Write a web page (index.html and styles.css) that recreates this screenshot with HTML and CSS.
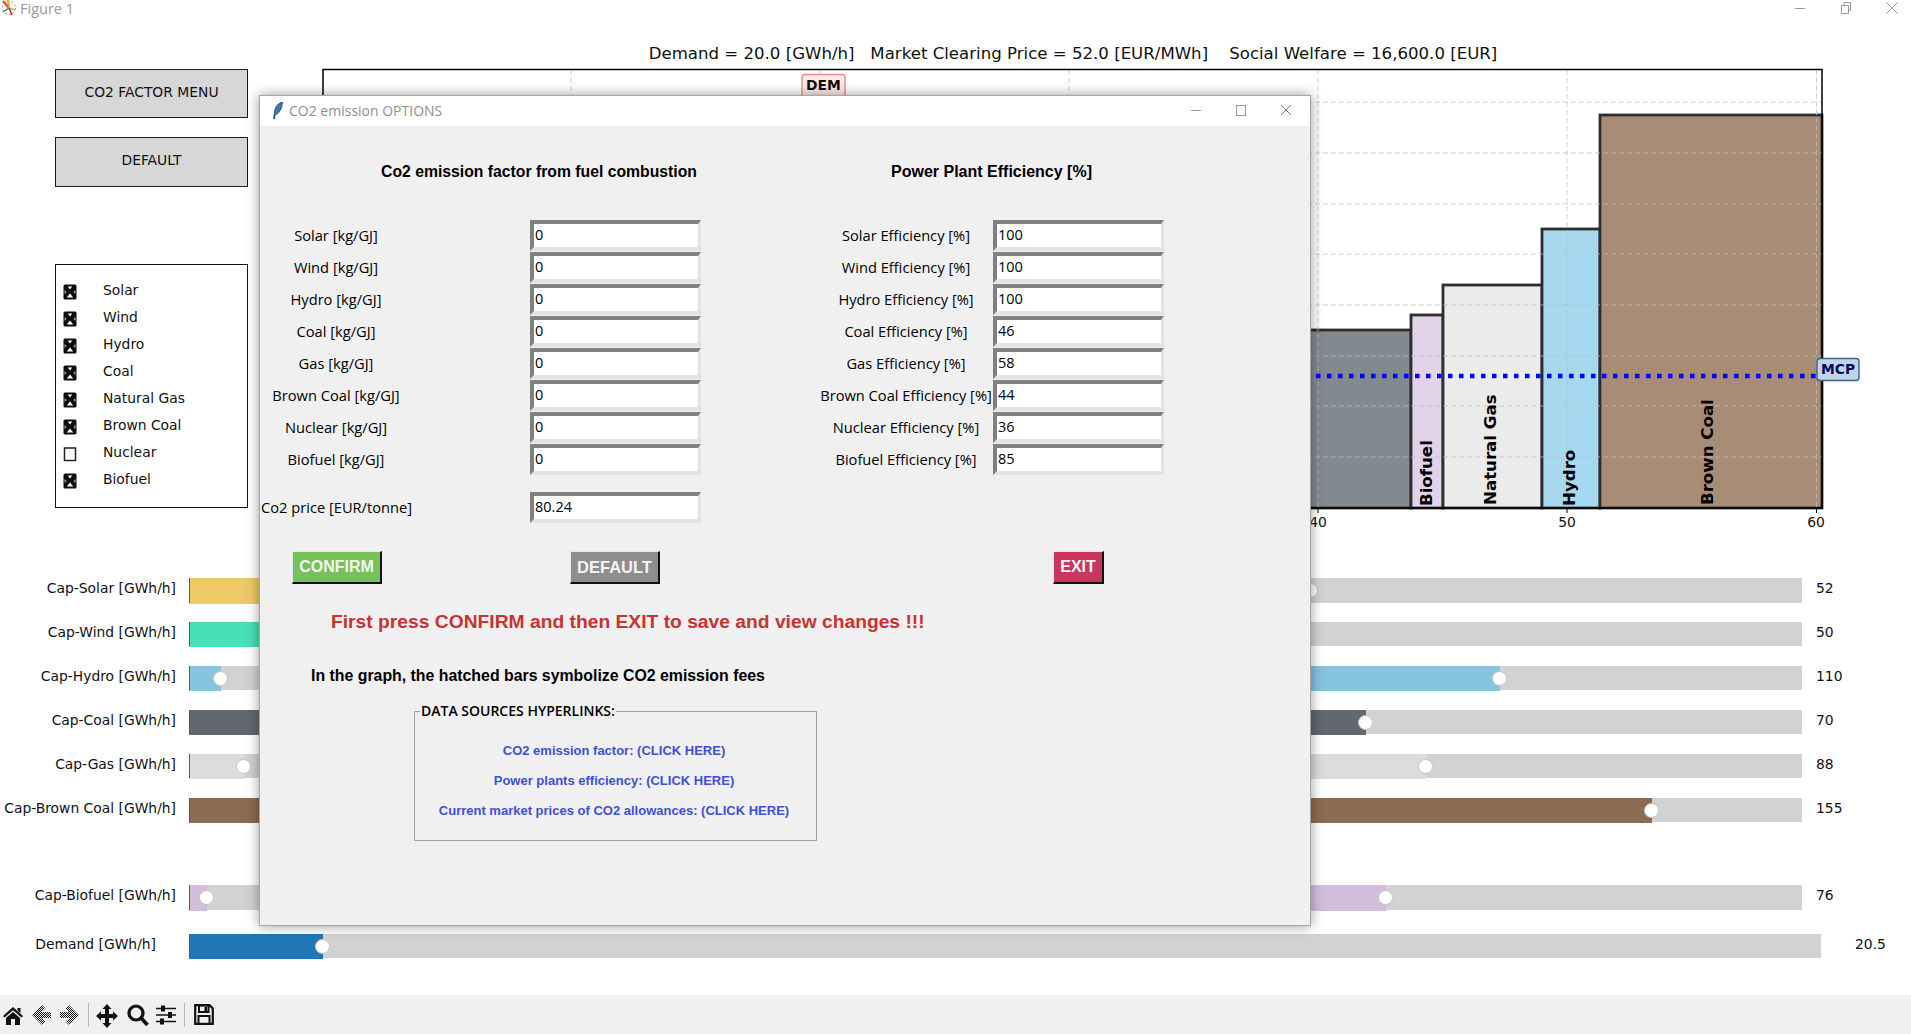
FILE: index.html
```html
<!DOCTYPE html>
<html>
<head>
    <title>Figure 1</title>
    <link rel="stylesheet" href="styles.css">
</head>
<body>
<div class="app">
    <header class="titlebar">
        <svg class="app-icon" width="16" height="18" viewBox="0 0 16 18">
            <circle cx="8" cy="9" r="6.5" fill="none" stroke="#999" stroke-width="1" stroke-dasharray="2 2"/>
            <path d="M8 9L2 2" stroke="#d9541e" stroke-width="2.4"/>
            <path d="M8 9L7 1" stroke="#f0a020" stroke-width="2"/>
            <path d="M8 9L14 11" stroke="#e8b030" stroke-width="1.6"/>
            <path d="M8 9L11 16" stroke="#c03020" stroke-width="1.6"/>
            <path d="M8 9L2 13" stroke="#3070b0" stroke-width="1.4"/>
        </svg>
        <span class="titlebar-text">Figure 1</span>
        <div class="win-controls">
            <svg width="14" height="14" viewBox="0 0 14 14"><path d="M2 7.5H12" stroke="#9a9a9a"/></svg>
            <svg width="14" height="14" viewBox="0 0 14 14"><path d="M2.5 4.5H9.5V12.5H2.5ZM5 4.5V1.5H11.5V9.5H9.5" fill="none" stroke="#9a9a9a"/></svg>
            <svg width="14" height="14" viewBox="0 0 14 14"><path d="M1.5 1.5L12.5 12.5M12.5 1.5L1.5 12.5" stroke="#9a9a9a"/></svg>
        </div>
    </header>

    <main class="figure">
        <div class="upper">
            <aside class="side">
                <button class="fig-btn">CO2 FACTOR MENU</button>
                <button class="fig-btn second">DEFAULT</button>
                <div class="check-panel">
                    <div class="check-row"><svg class="cb" viewBox="0 0 14 16"><use href="#checked"/></svg>Solar</div>
                    <div class="check-row"><svg class="cb" viewBox="0 0 14 16"><use href="#checked"/></svg>Wind</div>
                    <div class="check-row"><svg class="cb" viewBox="0 0 14 16"><use href="#checked"/></svg>Hydro</div>
                    <div class="check-row"><svg class="cb" viewBox="0 0 14 16"><use href="#checked"/></svg>Coal</div>
                    <div class="check-row"><svg class="cb" viewBox="0 0 14 16"><use href="#checked"/></svg>Natural Gas</div>
                    <div class="check-row"><svg class="cb" viewBox="0 0 14 16"><use href="#checked"/></svg>Brown Coal</div>
                    <div class="check-row"><svg class="cb" viewBox="0 0 14 16"><rect x="1.5" y="2" width="11" height="12.5" fill="#fff" stroke="#222" stroke-width="1.5"/></svg>Nuclear</div>
                    <div class="check-row"><svg class="cb" viewBox="0 0 14 16"><use href="#checked"/></svg>Biofuel</div>
                </div>
            </aside>

            <svg class="chart" width="1611" height="500" viewBox="300 40 1611 500">
                <text class="chart-title" x="1073" y="59" text-anchor="middle">Demand = 20.0 [GWh/h]   Market Clearing Price = 52.0 [EUR/MWh]    Social Welfare = 16,600.0 [EUR]</text>

                <rect x="1250" y="330" width="161" height="178" fill="#82898f" stroke="#2d2d2d" stroke-width="2.8"/>
                <rect x="1411" y="315" width="32" height="193" fill="#e3d3ea" stroke="#2d2d2d" stroke-width="2.8"/>
                <rect x="1443" y="285" width="99" height="223" fill="#ebebeb" stroke="#2d2d2d" stroke-width="2.8"/>
                <rect x="1542" y="229" width="58" height="279" fill="#a6d9ef" stroke="#2d2d2d" stroke-width="2.8"/>
                <rect x="1600" y="115" width="222" height="393" fill="#a88d76" stroke="#2d2d2d" stroke-width="2.8"/>

                <g class="grid">
                    <path d="M571 70V508M820 70V508M1069 70V508M1318 70V508M1567 70V508M1816.5 70V508"/>
                    <path d="M323 102H1822M323 153H1822M323 204H1822M323 254H1822M323 305H1822M323 356H1822M323 406H1822M323 457H1822"/>
                </g>

                <path d="M1316 376H1816" stroke="#0000ff" stroke-width="4.5" stroke-dasharray="4.5 6.5"/>

                <text class="bar-label" transform="translate(1432 506) rotate(-90)">Biofuel</text>
                <text class="bar-label" transform="translate(1496 505) rotate(-90)">Natural Gas</text>
                <text class="bar-label" transform="translate(1575 506) rotate(-90)">Hydro</text>
                <text class="bar-label" transform="translate(1713 505) rotate(-90)">Brown Coal</text>

                <rect x="323" y="69.5" width="1499" height="438.5" fill="none" stroke="#000" stroke-width="1.5"/>

                <path d="M1318 508V513M1567 508V513M1816.5 508V513" stroke="#000"/>
                <text class="tick" x="1318" y="527" text-anchor="middle">40</text>
                <text class="tick" x="1567" y="527" text-anchor="middle">50</text>
                <text class="tick" x="1816" y="527" text-anchor="middle">60</text>

                <rect x="802" y="74.5" width="43" height="26" rx="3" fill="#fdeae8" stroke="#f08a80" stroke-width="1.4"/>
                <text class="tag" x="823.5" y="90" text-anchor="middle" fill="#111">DEM</text>

                <rect x="1817" y="358.5" width="42" height="22" rx="3" fill="#bfd6ea" stroke="#3f5f8f" stroke-width="1.4"/>
                <text class="tag" x="1838" y="373.5" text-anchor="middle" fill="#0a0a5a">MCP</text>
            </svg>
        </div>

        <section class="sliders">
            <div class="slider-row">
                <span class="s-label">Cap-Solar [GWh/h]</span>
                <div class="s-track tall">
                    <div class="s-fill solar" style="width: 1121px"></div>
                    <div class="s-knob" style="left: 1121px"></div>
                </div>
                <span class="s-value">52</span>
            </div>
            <div class="slider-row">
                <span class="s-label">Cap-Wind [GWh/h]</span>
                <div class="s-track">
                    <div class="s-fill wind" style="width: 1100px"></div>
                </div>
                <span class="s-value">50</span>
            </div>
            <div class="slider-row">
                <span class="s-label">Cap-Hydro [GWh/h]</span>
                <div class="s-track">
                    <div class="s-fill hydro" style="left: 800px; width: 511px"></div>
                    <div class="s-fill hydro" style="width: 32px"></div>
                    <div class="s-knob" style="left: 31px"></div>
                    <div class="s-knob" style="left: 1310px"></div>
                </div>
                <span class="s-value">110</span>
            </div>
            <div class="slider-row">
                <span class="s-label">Cap-Coal [GWh/h]</span>
                <div class="s-track">
                    <div class="s-fill coal" style="width: 1177px"></div>
                    <div class="s-knob" style="left: 1176px"></div>
                </div>
                <span class="s-value">70</span>
            </div>
            <div class="slider-row">
                <span class="s-label">Cap-Gas [GWh/h]</span>
                <div class="s-track">
                    <div class="s-fill gas" style="left: 800px; width: 437px"></div>
                    <div class="s-fill gas" style="width: 55px"></div>
                    <div class="s-knob" style="left: 54px"></div>
                    <div class="s-knob" style="left: 1236px"></div>
                </div>
                <span class="s-value">88</span>
            </div>
            <div class="slider-row">
                <span class="s-label">Cap-Brown Coal [GWh/h]</span>
                <div class="s-track">
                    <div class="s-fill brown" style="width: 1463px"></div>
                    <div class="s-knob" style="left: 1462px"></div>
                </div>
                <span class="s-value">155</span>
            </div>
            <div class="slider-row biofuel-row">
                <span class="s-label">Cap-Biofuel [GWh/h]</span>
                <div class="s-track tall">
                    <div class="s-fill biofuel" style="left: 800px; width: 397px"></div>
                    <div class="s-fill biofuel" style="width: 18px"></div>
                    <div class="s-knob" style="left: 17px"></div>
                    <div class="s-knob" style="left: 1196px"></div>
                </div>
                <span class="s-value">76</span>
            </div>
            <div class="slider-row demand-row">
                <span class="s-label">Demand [GWh/h]</span>
                <div class="s-track">
                    <div class="s-fill demand" style="width: 134px"></div>
                    <div class="s-knob" style="left: 133px"></div>
                </div>
                <span class="s-value">20.5</span>
            </div>
        </section>
    </main>

    <footer class="toolbar">
        <svg class="tool t-home" width="20" height="18" viewBox="0 0 20 18"><path d="M10 0L20 9L18.5 10.6L10 3.2L1.5 10.6L0 9ZM14.5 1H17.5V6L14.5 3.4ZM3 11L10 5L17 11V18H12V12H8V18H3Z" fill="#111"/></svg>
        <svg class="tool t-back" width="20" height="20" viewBox="0 0 20 20"><path d="M0 10L10 0L13.5 3.5L9.5 7H19V13H9.5L13.5 16.5L10 20Z" fill="url(#dither)"/></svg>
        <svg class="tool t-fwd" width="20" height="20" viewBox="0 0 20 20"><path d="M20 10L10 0L6.5 3.5L10.5 7H1V13H10.5L6.5 16.5L10 20Z" fill="url(#dither)"/></svg>
        <span class="tool-sep"></span>
        <svg class="tool t-move" width="22" height="24" viewBox="0 0 22 24"><path d="M11 0L15.5 5H13V10H17V7.5L22 12L17 16.5V14H13V19H15.5L11 24L6.5 19H9V14H5V16.5L0 12L5 7.5V10H9V5H6.5Z" fill="#111"/></svg>
        <svg class="tool t-zoom" width="22" height="23" viewBox="0 0 22 23"><circle cx="9" cy="9" r="7" fill="none" stroke="#111" stroke-width="3.2"/><path d="M14 14L20.5 21" stroke="#111" stroke-width="3.6"/></svg>
        <svg class="tool t-sliders" width="20" height="20" viewBox="0 0 20 20"><path d="M0 3.5H20M0 10H20M0 16.5H20" stroke="#111" stroke-width="1.6"/><path d="M5 0.5H9V6.5H5ZM12 7H16V13H12ZM4 13.5H8V19.5H4Z" fill="#111"/></svg>
        <span class="tool-sep second"></span>
        <svg class="tool t-save" width="20" height="21" viewBox="0 0 20 21"><path d="M1.2 1.2H15.5L18.8 4.5V19.8H1.2Z" fill="none" stroke="#111" stroke-width="2.2"/><path d="M5 1.5H14.5V8H5Z" fill="none" stroke="#111" stroke-width="2"/><path d="M10.5 3H13V7H10.5Z" fill="#111"/><path d="M4.5 19.5V12H15.5V19.5" fill="none" stroke="#111" stroke-width="2"/></svg>
    </footer>

    <div class="dialog">
        <div class="dialog-title">
            <svg class="feather" width="10" height="17" viewBox="0 0 10 17"><path d="M9.5 0C5 1 2 5 1.5 10L1 13L0.5 17L1.5 17L2 13C6 12 9 7 9.5 0Z" fill="#3f76b5" stroke="#1b2f4a" stroke-width="0.7"/></svg>
            <span class="dialog-title-text">CO2 emission OPTIONS</span>
            <div class="win-controls small">
                <svg width="14" height="14" viewBox="0 0 14 14"><path d="M2 7.5H12" stroke="#9a9a9a"/></svg>
                <svg width="14" height="14" viewBox="0 0 14 14"><rect x="2.5" y="2.5" width="9" height="10" fill="none" stroke="#9a9a9a"/></svg>
                <svg width="14" height="14" viewBox="0 0 14 14"><path d="M2 2L12 12M12 2L2 12" stroke="#777"/></svg>
            </div>
        </div>
        <div class="dialog-body">
            <div class="heads">
                <h3 class="head-left">Co2 emission factor from fuel combustion</h3>
                <h3 class="head-right">Power Plant Efficiency [%]</h3>
            </div>

            <div class="field-row">
                <label>Solar [kg/GJ]</label><input class="entry" type="text" value="0">
                <label class="eff">Solar Efficiency [%]</label><input class="entry eff-entry" type="text" value="100">
            </div>
            <div class="field-row">
                <label>Wind [kg/GJ]</label><input class="entry" type="text" value="0">
                <label class="eff">Wind Efficiency [%]</label><input class="entry eff-entry" type="text" value="100">
            </div>
            <div class="field-row">
                <label>Hydro [kg/GJ]</label><input class="entry" type="text" value="0">
                <label class="eff">Hydro Efficiency [%]</label><input class="entry eff-entry" type="text" value="100">
            </div>
            <div class="field-row">
                <label>Coal [kg/GJ]</label><input class="entry" type="text" value="0">
                <label class="eff">Coal Efficiency [%]</label><input class="entry eff-entry" type="text" value="46">
            </div>
            <div class="field-row">
                <label>Gas [kg/GJ]</label><input class="entry" type="text" value="0">
                <label class="eff">Gas Efficiency [%]</label><input class="entry eff-entry" type="text" value="58">
            </div>
            <div class="field-row">
                <label>Brown Coal [kg/GJ]</label><input class="entry" type="text" value="0">
                <label class="eff">Brown Coal Efficiency [%]</label><input class="entry eff-entry" type="text" value="44">
            </div>
            <div class="field-row">
                <label>Nuclear [kg/GJ]</label><input class="entry" type="text" value="0">
                <label class="eff">Nuclear Efficiency [%]</label><input class="entry eff-entry" type="text" value="36">
            </div>
            <div class="field-row">
                <label>Biofuel [kg/GJ]</label><input class="entry" type="text" value="0">
                <label class="eff">Biofuel Efficiency [%]</label><input class="entry eff-entry" type="text" value="85">
            </div>
            <div class="field-row price-row">
                <label>Co2 price [EUR/tonne]</label><input class="entry" type="text" value="80.24">
            </div>

            <div class="action-row">
                <button class="tk-btn confirm">CONFIRM</button>
                <button class="tk-btn reset">DEFAULT</button>
                <button class="tk-btn exit">EXIT</button>
            </div>

            <p class="warning">First press CONFIRM and then EXIT to save and view changes !!!</p>
            <p class="note">In the graph, the hatched bars symbolize CO2 emission fees</p>

            <fieldset class="sources">
                <legend>DATA SOURCES HYPERLINKS:</legend>
                <a href="#">CO2 emission factor: (CLICK HERE)</a>
                <a href="#">Power plants efficiency: (CLICK HERE)</a>
                <a href="#">Current market prices of CO2 allowances: (CLICK HERE)</a>
            </fieldset>
        </div>
    </div>
</div>

<svg class="defs" width="0" height="0">
    <defs>
        <g id="checked">
            <rect x="0.5" y="0.5" width="13" height="15" rx="1.5" fill="#0c0c0c"/>
            <path d="M4.8 2.6H9.2L7 5.6ZM3.8 13.6L7 9.4L10.2 13.6Z" fill="#fff"/>
            <path d="M1.6 6L3.6 8L1.6 10ZM12.4 6L10.4 8L12.4 10Z" fill="#aaa"/>
        </g>
        <pattern id="dither" width="2" height="2" patternUnits="userSpaceOnUse">
            <rect width="1" height="1" fill="#111"/>
            <rect x="1" y="1" width="1" height="1" fill="#111"/>
        </pattern>
    </defs>
</svg>
</body>
</html>
```

FILE: styles.css
```css
* {
    box-sizing: border-box;
}

body {
    margin: 0;
    background-color: #fff;
    font-family: "DejaVu Sans", sans-serif;
    font-size: 13.87px;
    color: #111;
}

.app {
    position: relative;
    display: flex;
    flex-direction: column;
    width: 1911px;
    height: 1034px;
    overflow: hidden;
}

.defs {
    position: absolute;
}

/* title bar */
.titlebar {
    display: flex;
    align-items: center;
    height: 16px;
    flex-shrink: 0;
}

.app-icon {
    margin-left: 1px;
}

.titlebar-text {
    margin-left: 3px;
    font-family: "Open Sans", sans-serif;
    font-size: 14.5px;
    color: #9a9a9a;
}

.win-controls {
    display: flex;
    gap: 32px;
    margin-left: auto;
    margin-right: 12px;
}

.win-controls.small {
    gap: 31px;
    margin-right: 17px;
}

/* upper part */
.upper {
    display: flex;
    margin-top: 24px;
    height: 500px;
}

.side {
    width: 300px;
    padding: 29px 0 0 55px;
    flex-shrink: 0;
}

.fig-btn {
    display: block;
    width: 193px;
    height: 49px;
    padding: 0 0 3px;
    background-color: #d7d7d7;
    border: 1.5px solid #1a1a1a;
    font-family: "DejaVu Sans", sans-serif;
    font-size: 13.87px;
    color: #111;
}

.fig-btn.second {
    margin-top: 19px;
    height: 50px;
    padding-bottom: 5px;
}

.check-panel {
    width: 193px;
    height: 244px;
    margin-top: 77px;
    padding-top: 11px;
    border: 1.5px solid #111;
}

.check-row {
    display: flex;
    align-items: center;
    height: 27px;
    padding-left: 7px;
}

.cb {
    width: 14px;
    height: 16px;
    margin: 4px 26px 0 0;
}

.chart {
    display: block;
}

.chart-title {
    font-size: 16.6px;
    white-space: pre;
    fill: #111;
}

.grid path {
    fill: none;
    stroke: #bdbdbd;
    stroke-opacity: 0.75;
    stroke-width: 1;
    stroke-dasharray: 5 3;
}

.bar-label {
    font-size: 16.64px;
    font-weight: bold;
    fill: #000;
}

.tick {
    font-size: 13.87px;
    fill: #111;
}

.tag {
    font-size: 13.87px;
    font-weight: bold;
}

/* sliders */
.sliders {
    margin-top: 38px;
}

.slider-row {
    display: flex;
    align-items: flex-start;
    height: 44px;
}

.s-label {
    width: 176px;
    line-height: 21px;
    text-align: right;
    white-space: nowrap;
    flex-shrink: 0;
}

.s-track {
    position: relative;
    width: 1613px;
    height: 24px;
    margin-left: 13px;
    background-color: #d2d2d2;
    flex-shrink: 0;
}

.s-track.tall {
    height: 25px;
}

.s-track::before {
    content: "";
    position: absolute;
    z-index: 2;
    left: 0;
    top: 0;
    bottom: 0;
    width: 1px;
    background-color: #e0201c;
}

.s-fill {
    position: absolute;
    top: 0;
    bottom: -1px;
    left: 0;
}

.s-fill.solar { background-color: #eec966; }
.s-fill.wind { background-color: #48e0b5; }
.s-fill.hydro { background-color: #87c4df; }
.s-fill.coal { background-color: #616870; }
.s-fill.gas { background-color: #dcdcdc; }
.s-fill.brown { background-color: #8b6c50; }
.s-fill.biofuel { background-color: #d3bddc; }
.s-fill.demand { background-color: #1f77b4; }

.s-knob {
    position: absolute;
    top: 5px;
    width: 15px;
    height: 15px;
    margin-left: -7px;
    background-color: #fff;
    border: 1px solid #c4c4c4;
    border-radius: 50%;
}

.s-value {
    margin-left: 14px;
    line-height: 21px;
}

.biofuel-row {
    margin-top: 43px;
}

.demand-row {
    margin-top: 5px;
}

.demand-row .s-label {
    width: 156px;
}

.demand-row .s-track {
    width: 1632px;
    margin-left: 33px;
}

.demand-row .s-value {
    margin-left: 34px;
}

/* matplotlib toolbar */
.toolbar {
    display: flex;
    align-items: center;
    margin-top: auto;
    height: 39px;
    padding-left: 3px;
    background-color: #f0f0f0;
    flex-shrink: 0;
}

.tool {
    flex-shrink: 0;
}

.t-home { margin-top: 3px; }
.t-back { margin-left: 9px; }
.t-fwd { margin-left: 7px; }
.t-move { margin-left: 7px; margin-top: 2px; }
.t-zoom { margin-left: 9px; margin-top: 1px; }
.t-sliders { margin-left: 7px; }
.t-save { margin-left: 9px; margin-top: -1px; }

.tool-sep {
    width: 1px;
    height: 24px;
    margin-left: 9px;
    background-color: #b5b5b5;
}

.tool-sep.second {
    margin-left: 8px;
}

/* CO2 dialog */
.dialog {
    position: absolute;
    left: 259px;
    top: 95px;
    width: 1052px;
    height: 831px;
    background-color: #f0f0f0;
    border: 1px solid #a6a6a6;
    box-shadow: 0 0 12px rgba(0, 0, 0, 0.4);
}

.dialog-title {
    display: flex;
    align-items: center;
    height: 30px;
    padding: 0 0 2px 13px;
    background-color: #fff;
}

.dialog-title-text {
    margin-left: 6px;
    font-family: "Open Sans", sans-serif;
    font-size: 14px;
    color: #8f8f8f;
}

.dialog-body {
    padding: 36px 0 0 1px;
    font-family: "Open Sans", sans-serif;
    font-size: 14.67px;
    color: #000;
}

.heads {
    display: flex;
    height: 20px;
    margin-bottom: 38px;
}

.heads h3 {
    margin: 0;
    font-family: "Liberation Sans", sans-serif;
    font-size: 16px;
    line-height: 20px;
    text-align: center;
    white-space: nowrap;
}

.heads h3.head-left {
    width: 556px;
    font-size: 15.75px;
}

.head-right {
    width: 349px;
}

.field-row {
    display: flex;
    align-items: flex-start;
    height: 32px;
}

.field-row label {
    width: 150px;
    line-height: 30px;
    text-align: center;
    white-space: nowrap;
}

.field-row label.eff {
    width: 172px;
    margin-left: 119px;
}

.entry {
    width: 171px;
    height: 31px;
    margin-left: 119px;
    padding: 0 0 2px 1px;
    background-color: #fff;
    border-style: solid;
    border-width: 4px 3px 4px 4px;
    border-color: #808080 #e3e3e3 #e3e3e3 #808080;
    border-radius: 0;
    outline: none;
    font-family: "Open Sans", sans-serif;
    font-size: 14.5px;
    color: #000;
}

.entry.eff-entry {
    margin-left: 1px;
}

.price-row {
    margin-top: 16px;
}

.action-row {
    display: flex;
    margin-top: 27px;
    padding-left: 31px;
}

.tk-btn {
    height: 33px;
    padding: 0;
    border-style: solid;
    border-width: 1px 2px 2px 1px;
    border-color: #e8e8e8 #111 #111 #e8e8e8;
    font-family: "Liberation Sans", sans-serif;
    font-size: 16px;
    font-weight: bold;
    color: #f4f4f4;
}

.confirm {
    width: 90px;
    background-color: #77c158;
}

.reset {
    width: 90px;
    margin-left: 188px;
    background-color: #8e8e8e;
    font-size: 16.5px;
}

.exit {
    width: 51px;
    margin-left: 393px;
    background-color: #cc3560;
}

.warning {
    margin: 26px 0 0 70px;
    font-family: "Liberation Sans", sans-serif;
    font-size: 19.25px;
    font-weight: bold;
    line-height: 24px;
    color: #c73232;
    white-space: nowrap;
}

.note {
    margin: 32px 0 0 50px;
    font-family: "Liberation Sans", sans-serif;
    font-size: 15.87px;
    font-weight: bold;
    line-height: 20px;
    white-space: nowrap;
}

.sources {
    display: flex;
    flex-direction: column;
    align-items: center;
    gap: 10px;
    width: 403px;
    height: 140px;
    margin: 15px 0 0 153px;
    padding: 20px 3px 0 0;
    border: 1px solid #a0a0a0;
    min-inline-size: 0;
}

.sources legend {
    margin-left: 5px;
    padding: 0 1px;
    font-size: 14px;
    font-weight: 600;
    line-height: 20px;
    color: #000;
}

.sources a {
    font-family: "Liberation Sans", sans-serif;
    font-size: 13px;
    font-weight: bold;
    line-height: 20px;
    color: #3f4fd8;
    text-decoration: none;
    white-space: nowrap;
}
```
